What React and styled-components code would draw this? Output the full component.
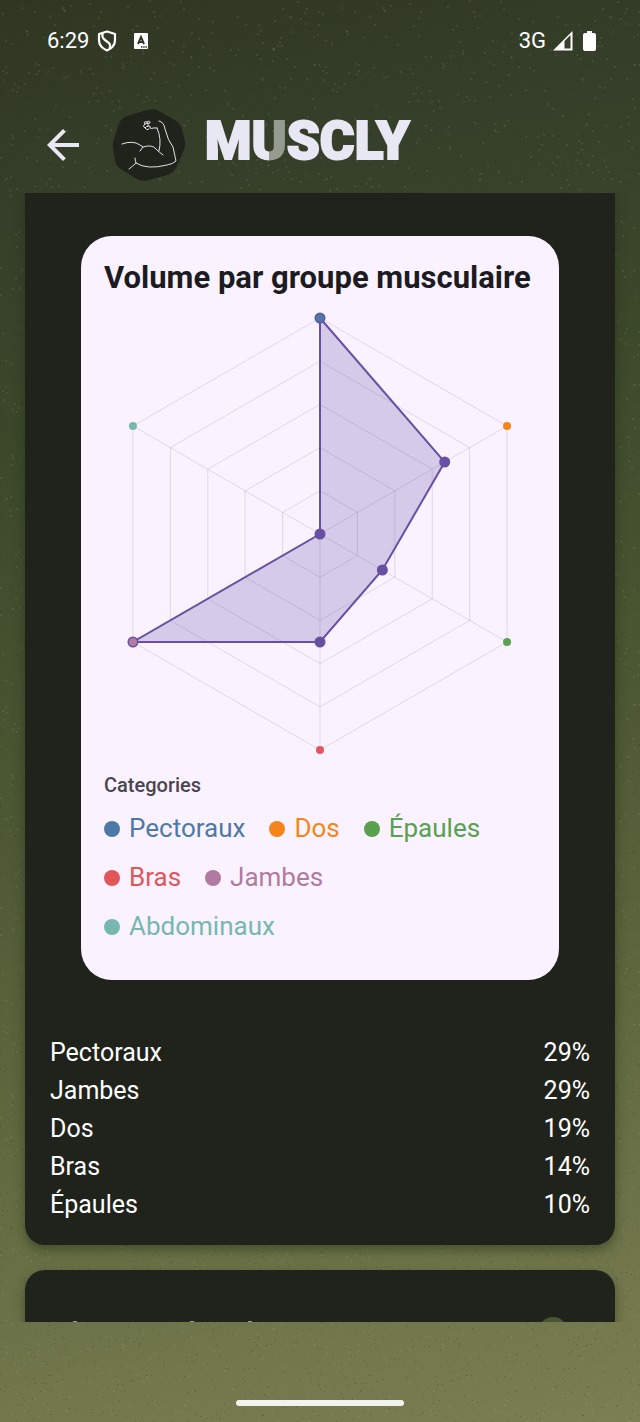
import styled, { createGlobalStyle } from "styled-components";
import { MdArrowBack } from "react-icons/md";

const categories = [
	{ name: "Pectoraux", color: "#4e79a7", value: 1 },
	{ name: "Dos", color: "#f5851a", value: 2 / 3 },
	{ name: "Épaules", color: "#59a14f", value: 1 / 3 },
	{ name: "Bras", color: "#e15759", value: 0.5 },
	{ name: "Jambes", color: "#b07aa1", value: 1 },
	{ name: "Abdominaux", color: "#76b7b2", value: 0 },
];

const shares = [
	["Pectoraux", "29%"],
	["Jambes", "29%"],
	["Dos", "19%"],
	["Bras", "14%"],
	["Épaules", "10%"],
];

// small tile of light and dark specks for the page background
const makeGrain = () => {
	const size = 320;
	let seed = 7;
	const rand = () => {
		seed = (seed * 16807) % 2147483647;
		return seed / 2147483647;
	};
	let rects = "";
	for (let i = 0; i < 1300; i++) {
		const x = Math.floor(rand() * size);
		const y = Math.floor(rand() * size);
		const light = i % 3 === 0;
		rects += `<rect x="${x}" y="${y}" width="${light ? 2 : 1}" height="${light ? 2 : 1}" fill="${
			light ? "#a3ac7c" : "#161d0e"
		}" opacity="${light ? 0.13 : 0.25}"/>`;
	}
	return encodeURIComponent(
		`<svg xmlns="http://www.w3.org/2000/svg" width="${size}" height="${size}">${rects}</svg>`
	);
};
const grain = makeGrain();

const RADIUS = 216;
const CX = 216;
const CY = 222;

const point = (index, ratio) => {
	const angle = (Math.PI / 3) * index - Math.PI / 2;
	return [
		CX + Math.cos(angle) * RADIUS * ratio,
		CY + Math.sin(angle) * RADIUS * ratio,
	];
};

const polygon = (ratios) => ratios.map((r, i) => point(i, r).join(",")).join(" ");

const RadarChart = () => (
	<Radar viewBox="0 0 432 444" role="img" aria-label="Volume par groupe musculaire">
		<g fill="none" stroke="#49454f" strokeOpacity="0.15">
			{[0.2, 0.4, 0.6, 0.8, 1].map((level) => (
				<polygon key={level} points={polygon(Array(6).fill(level))} />
			))}
			{categories.map((c, i) => {
				const [x, y] = point(i, 1);
				return <line key={c.name} x1={CX} y1={CY} x2={x} y2={y} />;
			})}
		</g>
		<polygon
			points={polygon(categories.map((c) => c.value))}
			fill="#6750a4"
			fillOpacity="0.25"
			stroke="#6750a4"
			strokeWidth="2"
		/>
		{categories.map((c, i) => {
			const [x, y] = point(i, c.value);
			return <circle key={c.name} cx={x} cy={y} r="5.5" fill="#6750a4" />;
		})}
		{categories.map((c, i) => {
			const [x, y] = point(i, 1);
			return <circle key={c.name} cx={x} cy={y} r="4" fill={c.color} />;
		})}
	</Radar>
);

const ArmLogo = () => (
	<Arm viewBox="0 0 72 72" aria-hidden="true">
		<path
			d="M34 1Q42 -1 48 3L63 12Q68 15 69 21L72 32Q73 37 70 43L64 57Q61 64 54 66L36 71Q28 73 22 69L8 60Q2 57 2 50L0 40Q-1 36 1 30L6 15Q8 9 14 7Z"
			fill="#20231c"
		/>
		<g fill="none" stroke="#e4e2e6" strokeWidth="1" strokeLinecap="round" strokeLinejoin="round">
			<path d="M9 35Q20 31 27 36L30 38L27 42" />
			<path d="M30 38Q39 35 43 40Q46 43 50 46M46 42Q49 30 44 19" />
			<path d="M46 12Q51 13 52 20Q55 32 60 38L63 52Q60 55 54 56Q34 61 23 54Q22 51 22 49M23 54Q20 57 16 60" />
			<path d="M44 19L40 19Q39 20 37 19Q38 17 36 17Q33 17 32 19Q34 22 36 20M32 19Q29 17 32 15Q30 12 34 13Q37 11 37 14Q34 14 32 15M34 13Q36 15 35 17" />
		</g>
	</Arm>
);

const App = () => {
	return (
		<>
			<GlobalStyle />
			<Page>
				<StatusBar>
					<StatusSide $gap="8px">
						<span>6:29</span>
						<svg width="20" height="24" viewBox="0 0 20 24" fill="none" stroke="#fff" strokeWidth="2.2">
							<path d="M10 2.5L2 5V11Q2 18 10 21.5Q18 18 18 11V5Z" strokeLinejoin="round" />
							<path d="M6 4Q4 8 8 11L12 14Q14 16 12.500 20" />
						</svg>
						<KeyboardBadge width="16" height="18" viewBox="0 0 16 18">
							<rect x="1" y="1" width="14" height="16" rx="1" fill="#fff" />
							<path d="M5 12L8 5L11 12M6 10H10" fill="none" stroke="#30382a" strokeWidth="2" />
							<path d="M8 15H14" stroke="#30382a" strokeWidth="1.4" strokeDasharray="1.5 .7" />
						</KeyboardBadge>
					</StatusSide>
					<StatusSide $gap="6px">
						<span>3G</span>
						<svg width="22" height="22" viewBox="0 0 22 22">
							<path d="M1 20.500L20.500 1V20.500Z" fill="#fff" />
							<path d="M12.500 11L18.500 5V18.500H12.500Z" fill="#383f2c" />
						</svg>
						<svg width="18" height="22" viewBox="0 0 18 22">
							<path d="M7 1H12V3H14Q16 3 16 5V19Q16 21 14 21H5Q3 21 3 19V5Q3 3 5 3H7Z" fill="#fff" />
						</svg>
					</StatusSide>
				</StatusBar>

				<Header>
					<BackButton type="button" aria-label="Retour">
						<MdArrowBack />
					</BackButton>
					<ArmLogo />
					<Wordmark>
						M<ShadedLetter>U</ShadedLetter>SCLY
					</Wordmark>
				</Header>

				<Content>
					<Panel $first>
						<ChartCard>
							<Title>Volume par groupe musculaire</Title>
							<RadarChart />
							<LegendTitle>Categories</LegendTitle>
							<Legend>
								{categories.map((c) => (
									<LegendItem key={c.name} $color={c.color}>
										{c.name}
									</LegendItem>
								))}
							</Legend>
						</ChartCard>
						<ShareTable>
							<tbody>
								{shares.map(([name, share]) => (
									<tr key={name}>
										<th scope="row">{name}</th>
										<td>{share}</td>
									</tr>
								))}
							</tbody>
						</ShareTable>
					</Panel>
					<Panel>
						<NextHeader>
							<svg width="180" height="12" viewBox="0 0 180 12" aria-hidden="true">
								<path d="M0 5H4M117 5H121M175 5H179" stroke="#9b9c98" strokeWidth="2" />
							</svg>
							<RoundMark />
						</NextHeader>
					</Panel>
				</Content>

				<NavBar>
					<NavHandle />
				</NavBar>
			</Page>
		</>
	);
};

export default App;

const GlobalStyle = createGlobalStyle`
* {
    box-sizing:border-box;
}
body{
    margin:0;
    font-family:Roboto, sans-serif;
}
`;

const Page = styled.div`
display:flex;
flex-direction:column;
height:100vh;
overflow:hidden;
background:
    url("data:image/svg+xml,${grain}"),
    linear-gradient(168deg, #2f3722 0%, #363f29 14%, #3e4a2b 32%, #4c5733 52%, #5b643c 68%, #6d7348 86%, #7c7e53 100%);
`;

const StatusBar = styled.div`
display:flex;
justify-content:space-between;
align-items:center;
flex:none;
height:81px;
padding:0 42px 0 47px;
color:#fff;
font-size:22px;
`;

const StatusSide = styled.div`
display:flex;
align-items:center;
gap:${(props) => props.$gap};

> span{
    line-height:24px;
}

> svg{
    flex:none;
}
`;

const KeyboardBadge = styled.svg`
margin-left:8px;
`;

const Header = styled.header`
display:flex;
align-items:center;
flex:none;
height:112px;
padding:16px 39px 0;
`;

const BackButton = styled.button`
display:flex;
padding:0;
border:0;
background:none;
color:#e8e8f4;
font-size:48px;
cursor:pointer;
`;

const Arm = styled.svg`
flex:none;
width:72px;
height:72px;
margin-left:26px;
`;

const Wordmark = styled.h1`
margin:0 0 8px 20px;
color:#e8e8f4;
font-size:53px;
font-weight:900;
line-height:64px;
-webkit-text-stroke:2px #e8e8f4;
`;

const ShadedLetter = styled.span`
color:transparent;
background:linear-gradient(90deg, #e8e8f4 50%, #969b92 50%);
background-clip:text;
-webkit-text-stroke:2px transparent;
`;

const Content = styled.main`
display:flex;
flex-direction:column;
flex:1;
gap:25px;
min-height:0;
padding:0 25px;
overflow:hidden;
`;

const Panel = styled.section`
flex:none;
padding:${(props) => (props.$first ? "43px 25px 21px" : "47px 43px 60px")};
border-radius:${(props) => (props.$first ? "0 0 20px 20px" : "20px")};
background:#20231c;
box-shadow:0 5px 12px rgba(30, 45, 20, 0.5);
`;

const ChartCard = styled.div`
margin:0 31px;
padding:24px 23px 29px;
border-radius:31px;
background:#faf3ff;
`;

const Title = styled.h2`
margin:0 0 16px;
color:#1c1b1f;
font-size:31px;
font-weight:700;
line-height:36px;
white-space:nowrap;
`;

const Radar = styled.svg`
display:block;
width:100%;
overflow:visible;
`;

const LegendTitle = styled.h3`
margin:17px 0 0;
color:#49454f;
font-size:20px;
font-weight:500;
line-height:24px;
`;

const Legend = styled.ul`
display:flex;
flex-wrap:wrap;
column-gap:24px;
margin:7px 0 0;
padding:0 24px 0 0;
list-style:none;
`;

const LegendItem = styled.li`
display:flex;
align-items:center;
gap:9px;
color:${(props) => props.$color};
font-size:26px;
line-height:49px;

&::before{
    content:"";
    width:16px;
    height:16px;
    border-radius:50%;
    background:${(props) => props.$color};
}
`;

const ShareTable = styled.table`
width:100%;
margin-top:54px;
border-collapse:collapse;
color:#fff;
font-size:25px;
line-height:38px;

th{
    padding:0;
    font-weight:400;
    text-align:left;
}

td{
    padding:0;
    text-align:right;
}
`;

const NextHeader = styled.div`
display:flex;
align-items:flex-start;
justify-content:space-between;
padding:0 4px 0 5px;
`;

const RoundMark = styled.div`
width:30px;
height:30px;
border-radius:50%;
background:#4a5533;
`;

const NavBar = styled.footer`
display:flex;
justify-content:center;
align-items:flex-end;
flex:none;
height:100px;
padding-bottom:16px;
`;

const NavHandle = styled.div`
width:168px;
height:6px;
border-radius:3px;
background:#f3f3ee;
`;
